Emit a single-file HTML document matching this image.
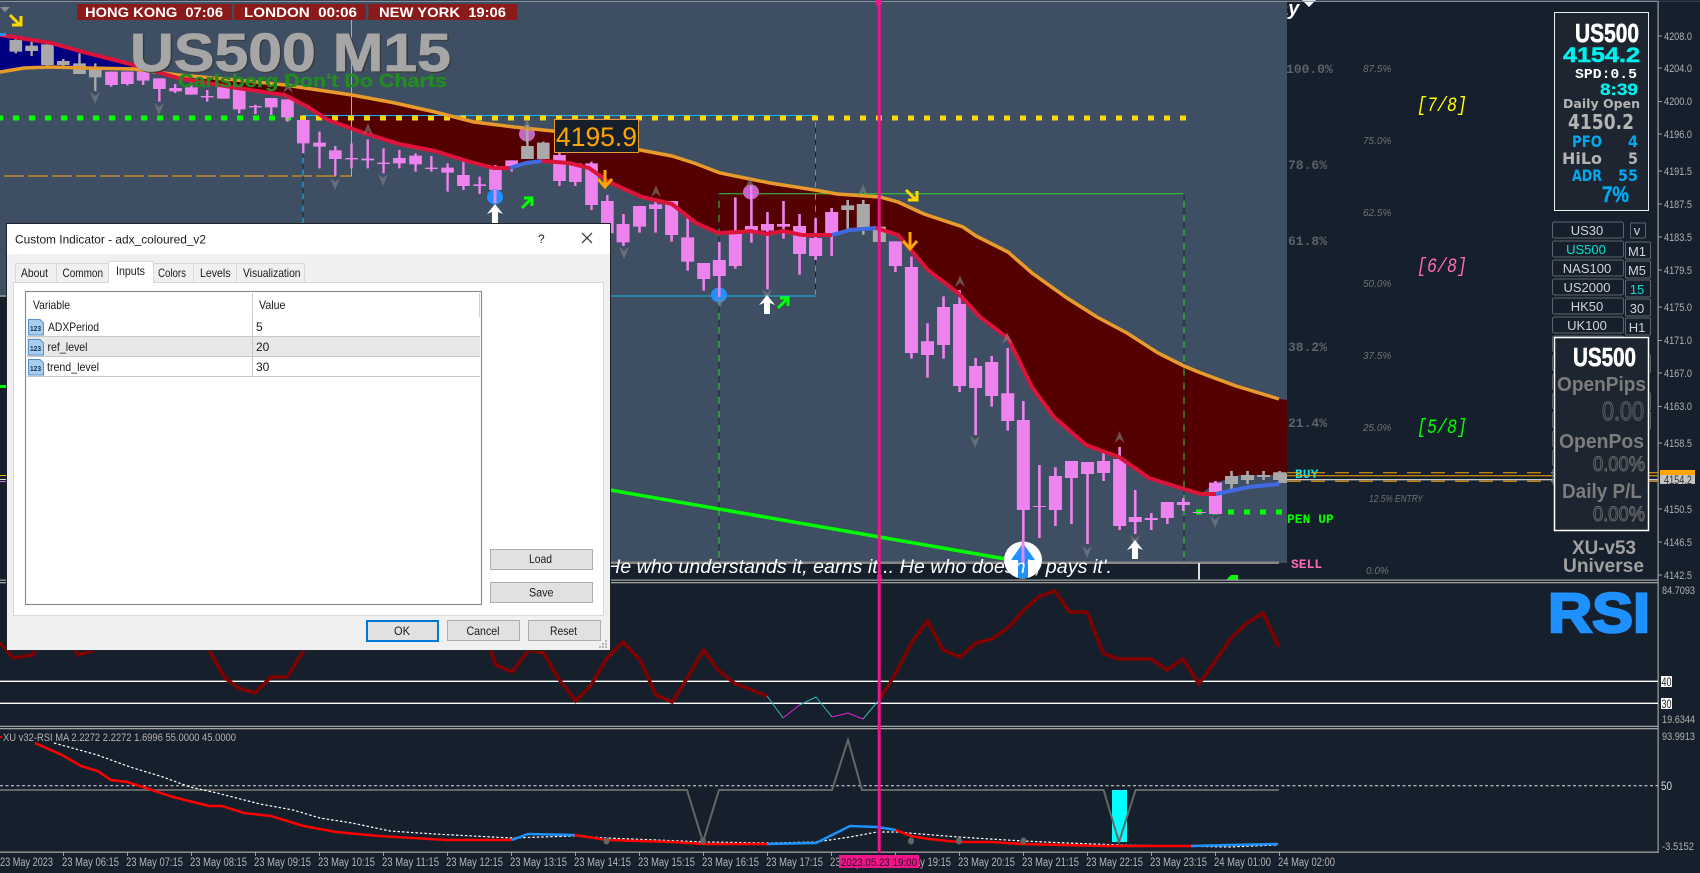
<!DOCTYPE html>
<html><head><meta charset="utf-8"><title>US500 M15</title>
<style>
html,body{margin:0;padding:0;background:#16202c;width:1700px;height:873px;overflow:hidden}
svg{display:block}
text{font-family:"Liberation Sans",sans-serif}
.m{font-family:"Liberation Mono",monospace}
.d{font-family:"DejaVu Sans",sans-serif}
.ax{fill:#b0b0b0;font-size:11px}
.t{fill:#b4b4b4;font-size:11.5px}
.dl{fill:#1a1a1a;font-size:12px}
.fb{fill:#5c6268;font-size:13px;font-family:"Liberation Mono",monospace;font-weight:bold}
.sm{fill:#6e7276;font-size:10px;font-style:italic}
.btn{fill:none;stroke:#5d646c;stroke-width:1}
.bt{fill:#d0d4d8;font-size:13px;text-anchor:middle}
.dg{fill:none;stroke:#6e6e6e;stroke-width:.9}
</style></head><body>
<svg xmlns="http://www.w3.org/2000/svg" width="1700" height="873" viewBox="0 0 1700 873">
<defs>
<path id="fd" d="M-5-6L0-2L5-6L0 6z" fill="#8a8a8a" fill-opacity=".55"/>
<path id="fu" d="M0-6L5 6L0 2L-5 6z" fill="#8a8a8a" fill-opacity=".55"/>
<path id="wa" d="M0 0L8 10L3 8V19H-3V8L-8 10z" fill="#fff"/>
<path id="oa" d="M0 0V17M-7 9L0 17L7 9" stroke="#ffa500" stroke-width="3" fill="none"/>
</defs>
<rect width="1700" height="873" fill="#16202c"/>
<text x="1277" y="15" fill="#fff" font-size="20" font-weight="bold" font-style="italic">ay</text>
<path d="M1302 0h14l-7 7z" fill="#fff"/>
<rect x="0" y="1" width="1287" height="562" fill="#3e4f63"/>
<rect x="0" y="297" width="7" height="283" fill="#16202c"/>
<rect x="0" y="295" width="7" height="2" fill="#888"/>
<rect x="0" y="385" width="6" height="3" fill="#0f0"/>
<rect x="0" y="475" width="7" height="1" fill="#ffa500"/>
<rect x="0" y="479" width="7" height="1" fill="#ddd"/>
<rect x="0" y="481" width="7" height="1" fill="#c070d0"/>
<rect x="0" y="0.7" width="1658" height="1.2" fill="#8c9aa8"/>
<rect x="1658" y="0.7" width="42" height="1" fill="#3a4654"/>

<!-- MA band -->
<polygon fill="#000080" points="0,35 20,38 51,43 87,53 134,65 134,67 87,68 51,67 24,68 0,72"/>
<polygon fill="#550000" points="134,67 178,75 237,80 285,85 352,95 395,103 435,112 474,122 514,127 553,131 590,140 620,148 640,150 672,156 694,163 720,173 750,179 770,183 815,190 837,194 880,197 898,202 924,214 963,227 976,236 1008,252 1032,273 1067,298 1097,317 1127,333 1158,353 1184,366 1201,373 1236,386 1279,399 1287,400 1287,475 1240,475 1215,483 1201,494 1184,489 1149,478 1119,457 1086,445 1054,417 1032,387 1008,338 980,317 958,293 928,270 911,250 898,235 876,228 850,230 832,235 802,235 783,231 767,234 750,231 741,232 718,233 696,223 672,204 642,197 620,187 609,182 589,168 569,163 542,161 526,163 510,168 494,168 467,161 435,151 399,144 364,133 328,120 308,107 285,95 237,88 178,78"/>

<!-- rectangles -->
<path d="M0 176H351.5V20" fill="none" stroke="#ffa500" stroke-width="1"/>
<path d="M0 176H351.5" fill="none" stroke="#3e4f63" stroke-width="1" stroke-dasharray="4 20"/>
<path d="M303 224V115.5H815.5V296H600" fill="none" stroke="#10b4f0" stroke-width="1"/>
<path d="M303 115.5V224M815.5 115.5V296" fill="none" stroke="#1a2430" stroke-width="1" stroke-dasharray="6 6"/>
<path d="M719 562V193.7H1184V562Z" fill="none" stroke="#32cd32" stroke-width="1"/>
<path d="M719 193.7V562M1184 193.7V562" fill="none" stroke="#1a2430" stroke-width="1" stroke-dasharray="7 7"/>
<path d="M600 296H720" stroke="#10b4f0" stroke-width="1"/>

<!-- dots -->
<path d="M-3 118H293" stroke="#0f0" stroke-width="5" stroke-dasharray="6 10"/>
<path d="M300 118H1188" stroke="#ffd700" stroke-width="5" stroke-dasharray="6 10"/>
<path d="M1196 512H1285" stroke="#0f0" stroke-width="5" stroke-dasharray="6 10"/>
<path d="M610 490L1023 562" stroke="#0f0" stroke-width="3.5" fill="none"/>
<rect x="600" y="561.5" width="679" height="2.5" fill="#888"/>

<!-- candles in first coordinate set -->
<g transform="scale(.3954 .3333)" fill="none">
<path stroke="#a9a9a9" stroke-width="6" d="M40 115V160M80 125V168M120 130V200M160 177V200M201 160V222M241 190V273M1334 400V477M1374 425V477"/>
<path stroke="#a9a9a9" stroke-width="32" d="M40 120V155M80 137V153M120 133V195M160 183V195M201 190V222M241 208V232M1334 438V477M1374 428V477"/>
<path stroke="#ee82ee" stroke-width="6" d="M281 215V260M322 215V256M362 215V255M403 235V305M443 252V279M484 245V284M524 270V305M565 260V296M605 265V340M646 314V342M686 294V345M727 298V365M767 360V460M808 395V505M848 438V527M889 430V505M930 418V505M970 445V520M1010 450V505M1051 460V515M1091 468V515M1132 490V575M1172 485V570M1213 530V582M1253 495V610M1294 481V515M1415 455V558M1455 490V558M1496 485V630M1536 585V700"/>
<path stroke="#ee82ee" stroke-width="32" d="M282 215V255M322 215V252M362 215V242M403 235V267M444 264V274M484 262V284M524 288V292M565 260V296M605 265V328M646 318V322M686 294V322M727 298V352M767 360V430M808 428V440M848 451V477M889 474V478M930 476V481M970 488V492M1010 474V490M1051 467V493M1091 503V507M1132 503V518M1172 525V558M1213 553V558M1253 508V570M1294 481V503M1415 465V543M1455 490V546M1496 490V615M1536 603V700"/>
</g>
<!-- candles in second coordinate set -->
<g transform="translate(620 100) scale(.4337 .3333)" fill="none">
<path stroke="#ee82ee" stroke-width="6" d="M8 342V438M45 318V398M82 300V398M119 303V425M156 354V512M193 489V572M229 426V600M266 292V506M303 300V428M340 336V568M377 303V416M414 342V524M451 354V480M488 324V468M635 424V516M672 470V776M709 670V833M746 589V776M783 570V876M820 774V1005M857 768V920M894 744V992M930 903V1390M967 1095V1314M1004 1102V1278M1041 1083V1272M1078 1086V1332M1115 1053V1143M1152 1041V1290M1188 1170V1302M1225 1239V1290M1262 1206V1272M1299 1194V1233M1373 1143V1242"/>
<path stroke="#ee82ee" stroke-width="30" d="M7 372V427M45 318V380M82 313V327M119 303V405M156 412V485M193 489V537M229 480V528M266 391V498M303 378V392M340 372V392M377 372V380M414 378V462M451 414V468M488 336V400M635 424V498M672 501V759M709 724V765M746 621V735M783 612V858M820 798V864M857 786V888M894 880V963M930 960V1230M967 1218V1221M1004 1128V1230M1041 1083V1134M1078 1086V1122M1115 1083V1119M1152 1077V1278M1188 1251V1266M1225 1254V1260M1262 1206V1254M1299 1206V1215M1336 1236V1239M1373 1148V1242"/>
<path stroke="#a9a9a9" stroke-width="6" d="M525 300V390M561 300V404M598 380V426M1410 1113V1170M1447 1113V1152M1484 1113V1140M1521 1113V1150"/>
<path stroke="#a9a9a9" stroke-width="30" d="M525 316V330M561 312V382M598 380V426M1410 1128V1152M1447 1125V1140M1484 1125V1131M1521 1117V1140"/>
</g>

<!-- circles -->
<ellipse cx="495" cy="197" rx="8" ry="7.5" fill="#1e90ff"/>
<rect x="493.5" y="190" width="3" height="13" fill="#ee82ee"/>
<ellipse cx="719" cy="295" rx="8" ry="7.5" fill="#1e90ff"/>
<rect x="718" y="285" width="2.5" height="12" fill="#ee82ee"/>
<ellipse cx="527" cy="134" rx="8" ry="7.5" fill="#c864c8"/>
<rect x="526" y="125" width="2.5" height="18" fill="#a9a9a9"/>
<ellipse cx="751" cy="192" rx="8" ry="7.5" fill="#c864c8"/>
<rect x="750" y="185" width="2.5" height="15" fill="#ee82ee"/>

<!-- MA lines -->
<polyline fill="none" stroke="#e89a2c" stroke-width="3.5" points="0,72 24,68 51,67 87,68 134,69 178,75 237,80 285,85 352,95 395,103 435,112 474,122 514,127 553,131 590,140 620,148 640,150 672,156 694,163 720,173 750,179 770,183 815,190 837,194 880,197 898,202 924,214 963,227 976,236 1008,252 1032,273 1067,298 1097,317 1127,333 1158,353 1184,366 1201,373 1236,386 1279,399"/>
<polyline fill="none" stroke="#dc143c" stroke-width="4" points="0,35 20,38 51,43 87,53 134,65 178,78 237,88 285,95 308,107 328,120 364,133 399,144 435,151 467,161 494,168 510,168"/>
<polyline fill="none" stroke="#4169e1" stroke-width="4" points="510,168 526,163 542,161"/>
<polyline fill="none" stroke="#dc143c" stroke-width="4" points="542,161 569,163 589,168 609,182 620,187 642,197 672,204 696,223 718,233 741,232 750,231 767,234 783,231 802,235 832,235"/>
<polyline fill="none" stroke="#4169e1" stroke-width="4" points="832,235 850,230 876,228"/>
<polyline fill="none" stroke="#dc143c" stroke-width="4" points="876,228 898,235 911,250 928,270 958,293 980,317 1008,338 1032,387 1054,417 1086,445 1119,457 1149,478 1184,489 1201,494 1216,494"/>
<polyline fill="none" stroke="#4169e1" stroke-width="4" points="1216,494 1249,487 1279,484"/>
<rect x="0" y="33" width="6" height="3" fill="#1e90ff"/>

<!-- fractals -->
<use href="#fd" x="95" y="98"/><use href="#fd" x="159" y="109"/><use href="#fd" x="335" y="184"/><use href="#fd" x="383" y="180"/>
<use href="#fu" x="288" y="87"/><use href="#fu" x="368" y="129"/><use href="#fu" x="527" y="125"/>
<use href="#fd" x="624" y="253"/><use href="#fd" x="767" y="295"/><use href="#fd" x="720" y="302"/><use href="#fd" x="975" y="442"/><use href="#fd" x="1087" y="552"/><use href="#fd" x="1135" y="541"/><use href="#fd" x="1215" y="522"/>
<use href="#fu" x="656" y="191"/><use href="#fu" x="750" y="183"/><use href="#fu" x="863" y="190"/><use href="#fu" x="960" y="281"/><use href="#fu" x="1007" y="338"/><use href="#fu" x="1119.5" y="437"/>
<path d="M0 7h10l-5 5z" fill="#8a8f95"/>

<!-- arrows -->
<use href="#wa" x="495" y="204"/><use href="#wa" x="767" y="295"/><use href="#wa" x="1135" y="540"/>
<use href="#oa" x="605" y="170"/><use href="#oa" x="910" y="232"/>
<path d="M10 15L20 25M21 16V25H12" stroke="#ffd700" stroke-width="3" fill="none"/>
<path d="M906 190L916 200M917 191V200H908" stroke="#ffd700" stroke-width="3" fill="none"/>
<path d="M522 208L532 198M524 198H532V206" stroke="#0f0" stroke-width="3" fill="none"/>
<path d="M778 308L788 298M780 298H788V306" stroke="#0f0" stroke-width="3" fill="none"/>

<!-- bottom text / circle -->
<rect x="0" y="564" width="1287" height="16" fill="#16202c"/>
<rect x="1198" y="563" width="2" height="17" fill="#ddd"/>
<path d="M1226 580L1231 575H1238V580z" fill="#0f0"/>
<ellipse cx="1023" cy="560" rx="19" ry="18.5" fill="#fff"/>
<path d="M1023 543L1035 560H1028V578H1018V560H1011z" fill="#1e90ff"/>
<rect x="1021.5" y="540" width="3" height="24" fill="#ee82ee"/>
<text x="606" y="573" fill="#fff" font-size="19" font-style="italic" textLength="506" lengthAdjust="spacingAndGlyphs">He who understands it, earns it... He who doesn't, pays it'.</text>

<!-- headers -->
<rect x="77" y="4" width="155" height="16" fill="#8b1a1a"/>
<rect x="234" y="4" width="132" height="16" fill="#8b1a1a"/>
<rect x="368.5" y="4" width="148.5" height="16" fill="#8b1a1a"/>
<text x="85" y="17" fill="#fff" font-size="14" font-weight="bold" textLength="138" lengthAdjust="spacingAndGlyphs" xml:space="preserve">HONG KONG  07:06</text>
<text x="244" y="17" fill="#fff" font-size="14" font-weight="bold" textLength="113" lengthAdjust="spacingAndGlyphs" xml:space="preserve">LONDON  00:06</text>
<text x="379" y="17" fill="#fff" font-size="14" font-weight="bold" textLength="127" lengthAdjust="spacingAndGlyphs" xml:space="preserve">NEW YORK  19:06</text>

<text x="131.500" y="72" fill="#3a3a3a" font-size="54" font-weight="bold" stroke="#3a3a3a" stroke-width=".8" textLength="321" lengthAdjust="spacingAndGlyphs">US500 M15</text>
<text x="130" y="71" fill="#a6a6a6" font-size="54" font-weight="bold" stroke="#a6a6a6" stroke-width=".8" textLength="321" lengthAdjust="spacingAndGlyphs">US500 M15</text>
<text x="178" y="87" fill="#228b22" stroke="#228b22" stroke-width=".4" font-size="18" font-weight="bold" textLength="269" lengthAdjust="spacingAndGlyphs">Carlsberg Don't Do Charts</text>

<rect x="554.500" y="119.500" width="84" height="33" fill="#16202c" stroke="#e89a2c"/>
<text x="556" y="146" fill="#ffa500" font-size="27" textLength="81" lengthAdjust="spacingAndGlyphs">4195.9</text>

<!-- fib labels -->
<text x="1286" y="73" class="fb">100.0%</text>
<text x="1288" y="169" class="fb">78.6%</text>
<text x="1288" y="245" class="fb">61.8%</text>
<text x="1288" y="351" class="fb">38.2%</text>
<text x="1288" y="427" class="fb">21.4%</text>
<text x="1295" y="478" class="m" fill="#00e5e5" font-size="13" font-weight="bold">BUY</text>
<text x="1287" y="523" class="m" fill="#0f0" font-size="13" font-weight="bold">PEN UP</text>
<text x="1291" y="568" class="m" fill="#ff69b4" font-size="13" font-weight="bold">SELL</text>
<text x="1363" y="72" class="sm">87.5%</text>
<text x="1363" y="144" class="sm">75.0%</text>
<text x="1363" y="216" class="sm">62.5%</text>
<text x="1363" y="287" class="sm">50.0%</text>
<text x="1363" y="359" class="sm">37.5%</text>
<text x="1363" y="431" class="sm">25.0%</text>
<text x="1369" y="502" class="sm" textLength="54" lengthAdjust="spacingAndGlyphs">12.5% ENTRY</text>
<text x="1366" y="574" class="sm">0.0%</text>
<text x="1417" y="111" class="m" fill="#ffff00" font-size="20" font-style="italic" textLength="50" lengthAdjust="spacingAndGlyphs">[7/8]</text>
<text x="1417" y="272" class="m" fill="#ff69b4" font-size="20" font-style="italic" textLength="50" lengthAdjust="spacingAndGlyphs">[6/8]</text>
<text x="1417" y="433" class="m" fill="#0f0" font-size="20" font-style="italic" textLength="50" lengthAdjust="spacingAndGlyphs">[5/8]</text>

<!-- price lines -->
<path d="M1287 472.700H1658M1287 481.300H1658" stroke="#ffa500" stroke-width="1" stroke-dasharray="14 10"/>
<path d="M1287 475.700H1658" stroke="#ffa500" stroke-width="1"/>
<path d="M1287 479.700H1658" stroke="#fff" stroke-width="1"/>
<rect x="1280" y="473" width="7" height="10" fill="#a9a9a9"/>

<!-- buttons -->
<g>
<rect class="btn" x="1552.500" y="222" width="71" height="16" rx="2"/>
<rect class="btn" x="1552.500" y="241" width="71" height="16" rx="2"/>
<rect class="btn" x="1552.500" y="260" width="71" height="16" rx="2"/>
<rect class="btn" x="1552.500" y="279" width="71" height="16" rx="2"/>
<rect class="btn" x="1552.500" y="298" width="71" height="16" rx="2"/>
<rect class="btn" x="1552.500" y="317" width="71" height="16" rx="2"/>
<rect class="btn" x="1552.500" y="336" width="71" height="16" rx="2"/>
<rect class="btn" x="1552.500" y="355" width="71" height="16" rx="2"/>
<rect class="btn" x="1552.500" y="374" width="71" height="16" rx="2"/>
<rect class="btn" x="1552.500" y="393" width="71" height="16" rx="2"/>
<rect class="btn" x="1552.500" y="412" width="71" height="16" rx="2"/>
<rect class="btn" x="1552.500" y="431" width="71" height="16" rx="2"/>
<rect class="btn" x="1552.500" y="450" width="71" height="16" rx="2"/>
<rect class="btn" x="1552.500" y="469" width="71" height="16" rx="2"/>
<rect class="btn" x="1630.500" y="223" width="15" height="15" rx="1"/>
<rect class="btn" x="1625.500" y="242" width="25" height="17" rx="1"/>
<rect class="btn" x="1625.500" y="261" width="25" height="17" rx="1"/>
<rect class="btn" x="1625.500" y="280" width="25" height="17" rx="1"/>
<rect class="btn" x="1625.500" y="299" width="25" height="17" rx="1"/>
<rect class="btn" x="1625.500" y="318" width="25" height="17" rx="1"/>
<rect class="btn" x="1625.500" y="355" width="25" height="17" rx="1"/>
<rect class="btn" x="1625.500" y="393" width="25" height="17" rx="1"/>
<rect class="btn" x="1625.500" y="412" width="25" height="17" rx="1"/>
</g>
<text x="1587" y="235" class="bt">US30</text>
<text x="1586" y="254" class="bt" style="fill:#00e5d0">US500</text>
<text x="1587" y="273" class="bt">NAS100</text>
<text x="1587" y="292" class="bt">US2000</text>
<text x="1587" y="311" class="bt">HK50</text>
<text x="1587" y="330" class="bt">UK100</text>
<text x="1637" y="235" class="bt">v</text>
<text x="1637" y="256" class="bt">M1</text>
<text x="1637" y="275" class="bt">M5</text>
<text x="1637" y="294" class="bt" style="fill:#00e5d0">15</text>
<text x="1637" y="313" class="bt">30</text>
<text x="1637" y="332" class="bt">H1</text>

<!-- info box 1 -->
<rect x="1554.500" y="12.500" width="94" height="198" fill="#1c2530" stroke="#e8f0f0"/>
<text x="1575" y="42" fill="#fff" stroke="#fff" stroke-width=".6" font-size="26" font-weight="bold" textLength="64" lengthAdjust="spacingAndGlyphs">US500</text>
<text x="1563" y="62" fill="#00f0f0" stroke="#00f0f0" stroke-width=".5" font-size="21" font-weight="bold" textLength="77" lengthAdjust="spacingAndGlyphs">4154.2</text>
<text x="1575" y="78" class="m" fill="#fff" font-size="14" font-weight="bold" textLength="62" lengthAdjust="spacingAndGlyphs">SPD:0.5</text>
<text x="1600" y="95" fill="#00f0f0" stroke="#00f0f0" stroke-width=".3" font-size="17" font-weight="bold" textLength="38" lengthAdjust="spacingAndGlyphs">8:39</text>
<text x="1563" y="108" class="d" fill="#b4b4b4" font-size="12" font-weight="bold" textLength="77" lengthAdjust="spacingAndGlyphs">Daily Open</text>
<text x="1568" y="129" class="d" fill="#b4b4b4" font-size="20" font-weight="bold" textLength="66" lengthAdjust="spacingAndGlyphs">4150.2</text>
<text x="1572" y="147" class="d" fill="#00a8f0" font-size="16" font-weight="bold" textLength="30" lengthAdjust="spacingAndGlyphs">PFO</text>
<text x="1628" y="147" class="d" fill="#00a8f0" font-size="16" font-weight="bold" textLength="10" lengthAdjust="spacingAndGlyphs">4</text>
<text x="1562" y="164" class="d" fill="#b4b4b4" font-size="16" font-weight="bold" textLength="40" lengthAdjust="spacingAndGlyphs">HiLo</text>
<text x="1628" y="164" class="d" fill="#b4b4b4" font-size="16" font-weight="bold" textLength="10" lengthAdjust="spacingAndGlyphs">5</text>
<text x="1572" y="181" class="d" fill="#00a8f0" font-size="16" font-weight="bold" textLength="30" lengthAdjust="spacingAndGlyphs">ADR</text>
<text x="1618" y="181" class="d" fill="#00a8f0" font-size="16" font-weight="bold" textLength="20" lengthAdjust="spacingAndGlyphs">55</text>
<text x="1602" y="202" fill="#00a8f0" stroke="#00a8f0" stroke-width=".4" font-size="22" font-weight="bold" textLength="27" lengthAdjust="spacingAndGlyphs">7%</text>

<!-- info box 2 -->
<rect x="1554.500" y="337.500" width="94" height="193" fill="#1c2530" stroke="#fff" stroke-width="1.500"/>
<text x="1573" y="366" fill="#fff" stroke="#fff" stroke-width=".6" font-size="26" font-weight="bold" textLength="63" lengthAdjust="spacingAndGlyphs">US500</text>
<text x="1557" y="391" fill="#7c7c7c" font-size="20" font-weight="bold" textLength="89" lengthAdjust="spacingAndGlyphs">OpenPips</text>
<text x="1602" y="420" class="dg" font-size="26" textLength="42" lengthAdjust="spacingAndGlyphs">0.00</text>
<text x="1559" y="448" fill="#7c7c7c" font-size="20" font-weight="bold" textLength="85" lengthAdjust="spacingAndGlyphs">OpenPos</text>
<text x="1593" y="471" class="dg" font-size="21" textLength="52" lengthAdjust="spacingAndGlyphs">0.00%</text>
<text x="1562" y="498" fill="#7c7c7c" font-size="20" font-weight="bold" textLength="80" lengthAdjust="spacingAndGlyphs">Daily P/L</text>
<text x="1593" y="521" class="dg" font-size="21" textLength="52" lengthAdjust="spacingAndGlyphs">0.00%</text>
<text x="1572" y="554" fill="#a0a0a0" font-size="19" font-weight="bold" textLength="64" lengthAdjust="spacingAndGlyphs">XU-v53</text>
<text x="1563" y="572" fill="#a0a0a0" font-size="19" font-weight="bold" textLength="81" lengthAdjust="spacingAndGlyphs">Universe</text>
<text x="1548" y="632" fill="#1e90ff" font-size="56" font-weight="bold" textLength="102" lengthAdjust="spacingAndGlyphs" stroke="#1e90ff" stroke-width="2.5">RSI</text>

<!-- pane separators and axis -->
<rect x="0" y="579.500" width="1658" height="1.300" fill="#a0a0a0"/>
<rect x="0" y="582" width="1658" height="1.300" fill="#a0a0a0"/>
<rect x="0" y="725.700" width="1658" height="1.300" fill="#a0a0a0"/>
<rect x="0" y="728" width="1658" height="1.300" fill="#a0a0a0"/>
<rect x="0" y="851.500" width="1658" height="1.300" fill="#a0a0a0"/>
<rect x="1657.500" y="1" width="1.200" height="852" fill="#a0a0a0"/>

<!-- RSI pane -->
<path d="M0 681.300H1658M0 703.300H1658" stroke="#fff" stroke-width="1.300"/>
<polyline fill="none" stroke="#800000" stroke-width="3.500" points="0,643 13.500,658 32.500,655 40,640 60,630 78.600,655 97.500,649 150,620 208.700,650 225,678 238.500,688 255,693 271,677 287,677 306,647 400,620 490.500,650 496,665 512,672 528.500,650 543.600,653 558,678 575.600,701 591,685 607,658 623,642 640,660 656,695 672,702 688,677 703.500,650 718,670 734,683 767,696"/>
<path d="M767 696L783 718" stroke="#2fb8b8" fill="none"/>
<path d="M783 718L799.500 705" stroke="#e020e0" fill="none"/>
<path d="M799.500 705L816 697L832 717" stroke="#2fb8b8" fill="none"/>
<path d="M832 717L848 713L863 719" stroke="#e020e0" fill="none"/>
<path d="M863 719L879 700" stroke="#2fb8b8" fill="none"/>
<polyline fill="none" stroke="#800000" stroke-width="3.500" points="879,700 893,678 912,642 927.500,621 943,650 960,657 976,643 992,639 1010,626 1023,611 1038,597 1055,591 1069.500,612 1087,612 1103,653 1118,659 1151,659 1167,670 1183,659 1199,684 1216,660 1231,638 1247,623 1263,613 1279,647"/>

<!-- indicator pane -->
<text x="3" y="741" fill="#b4b4b4" font-size="11" textLength="233" lengthAdjust="spacingAndGlyphs">XU v32-RSI MA 2.2272 2.2272 1.6996 55.0000 45.0000</text>
<rect x="0" y="736" width="2" height="2" fill="#f00"/>
<rect x="1112" y="790" width="15" height="52" fill="#0ff"/>
<path d="M0 785.700H1658" stroke="#ddd" stroke-width="1" stroke-dasharray="3 2.500"/>
<polyline fill="none" stroke="#666" stroke-width="2" points="0,790 687,790 703,842 719,790 832,790 848,740 850,747 862,790 1103.600,790 1119,842 1135.600,790 1279,790"/>
<polyline fill="none" stroke="#fff" stroke-width="1.200" stroke-dasharray="2.500 2" points="54,743 97.500,755 130,767 163,777 190,787 217,793 260,804 293,810 320,818 352,823 390,831 434,834 512,838 542,837 575,836 607,838 705,842 770,843 816,842 850,837 877,832 896,832 958,837 1023,841 1067,843 1121,845 1229,847 1278,845"/>
<polyline fill="none" stroke="#f00" stroke-width="2.500" points="35,743 62,755 81,766 97.500,771 111,780 127,782 146,788 173,797 209,806 222,806 244,813 271,816 303.500,826 336,832 379,836 447,840 512,840"/>
<polyline fill="none" stroke="#1e90ff" stroke-width="2.500" points="512,840 528,834 574.500,835"/>
<polyline fill="none" stroke="#f00" stroke-width="2.500" points="574.500,835 607,840 672,842 705,844 767,844"/>
<polyline fill="none" stroke="#1e90ff" stroke-width="2.500" points="767,844 816,843 832,835 850,826 877,827 896,830"/>
<polyline fill="none" stroke="#f00" stroke-width="2.500" points="896,830 911,836 929,839 958,842 991,842 1023,844 1105,846 1191,846"/>
<polyline fill="none" stroke="#1e90ff" stroke-width="2.500" points="1191,846 1229,845 1278,844"/>
<ellipse cx="606.500" cy="841" rx="3" ry="3.500" fill="#666"/>
<ellipse cx="703" cy="841" rx="3" ry="3.500" fill="#666"/>
<ellipse cx="911" cy="841" rx="3" ry="3.500" fill="#666"/>
<ellipse cx="959" cy="841" rx="3" ry="3.500" fill="#666"/>
<ellipse cx="1023.500" cy="841" rx="3" ry="3.500" fill="#666"/>

<!-- price axis -->
<path stroke="#a0a0a0" d="M1658 36h4M1658 68h4M1658 101.500h4M1658 134h4M1658 171h4M1658 204h4M1658 237h4M1658 270h4M1658 307h4M1658 340.500h4M1658 373h4M1658 406.500h4M1658 443h4M1658 509h4M1658 542h4M1658 575h4"/>
<g class="ax">
<text x="1664" y="40" class="ax" textLength="28" lengthAdjust="spacingAndGlyphs">4208.0</text>
<text x="1664" y="72" class="ax" textLength="28" lengthAdjust="spacingAndGlyphs">4204.0</text>
<text x="1664" y="105" class="ax" textLength="28" lengthAdjust="spacingAndGlyphs">4200.0</text>
<text x="1664" y="138" class="ax" textLength="28" lengthAdjust="spacingAndGlyphs">4196.0</text>
<text x="1664" y="175" class="ax" textLength="28" lengthAdjust="spacingAndGlyphs">4191.5</text>
<text x="1664" y="208" class="ax" textLength="28" lengthAdjust="spacingAndGlyphs">4187.5</text>
<text x="1664" y="241" class="ax" textLength="28" lengthAdjust="spacingAndGlyphs">4183.5</text>
<text x="1664" y="274" class="ax" textLength="28" lengthAdjust="spacingAndGlyphs">4179.5</text>
<text x="1664" y="311" class="ax" textLength="28" lengthAdjust="spacingAndGlyphs">4175.0</text>
<text x="1664" y="344" class="ax" textLength="28" lengthAdjust="spacingAndGlyphs">4171.0</text>
<text x="1664" y="377" class="ax" textLength="28" lengthAdjust="spacingAndGlyphs">4167.0</text>
<text x="1664" y="410" class="ax" textLength="28" lengthAdjust="spacingAndGlyphs">4163.0</text>
<text x="1664" y="447" class="ax" textLength="28" lengthAdjust="spacingAndGlyphs">4158.5</text>
<text x="1664" y="513" class="ax" textLength="28" lengthAdjust="spacingAndGlyphs">4150.5</text>
<text x="1664" y="546" class="ax" textLength="28" lengthAdjust="spacingAndGlyphs">4146.5</text>
<text x="1664" y="579" class="ax" textLength="28" lengthAdjust="spacingAndGlyphs">4142.5</text>
<text x="1662" y="594" class="ax" textLength="33" lengthAdjust="spacingAndGlyphs">84.7093</text>
<text x="1662" y="723" class="ax" textLength="33" lengthAdjust="spacingAndGlyphs">19.6344</text>
<text x="1662" y="740" class="ax" textLength="33" lengthAdjust="spacingAndGlyphs">93.9913</text>
<text x="1662" y="850" class="ax" textLength="32" lengthAdjust="spacingAndGlyphs">-3.5152</text>
<text x="1661" y="790" class="ax" textLength="11" lengthAdjust="spacingAndGlyphs" style="fill:#ddd;font-size:12px">50</text>
</g>
<rect x="1660" y="470" width="35" height="6" fill="#ffa500"/>
<rect x="1660" y="475" width="35" height="9" fill="#c4c4c4"/>
<text x="1664" y="484" font-size="12" fill="#333" textLength="28" lengthAdjust="spacingAndGlyphs">4154.2</text>
<rect x="1661" y="676" width="11" height="11" fill="#fff"/>
<text x="1661.500" y="686" font-size="12" fill="#222" textLength="10" lengthAdjust="spacingAndGlyphs">40</text>
<rect x="1661" y="698" width="11" height="11" fill="#fff"/>
<text x="1661.500" y="708" font-size="12" fill="#222" textLength="10" lengthAdjust="spacingAndGlyphs">30</text>

<!-- time axis -->
<path stroke="#a0a0a0" d="M63.500 852v4M127.500 852v4M191.500 852v4M255.500 852v4M319.500 852v4M383.500 852v4M447.500 852v4M511.500 852v4M575.500 852v4M639.500 852v4M703.500 852v4M767.500 852v4M831.500 852v4M895.500 852v4M959.500 852v4M1023.500 852v4M1087.500 852v4M1151.500 852v4M1215.500 852v4M1279.500 852v4"/>
<text x="0" y="866" class="t" textLength="53" lengthAdjust="spacingAndGlyphs">23 May 2023</text>
<text x="62" y="866" class="t" textLength="57" lengthAdjust="spacingAndGlyphs">23 May 06:15</text>
<text x="126" y="866" class="t" textLength="57" lengthAdjust="spacingAndGlyphs">23 May 07:15</text>
<text x="190" y="866" class="t" textLength="57" lengthAdjust="spacingAndGlyphs">23 May 08:15</text>
<text x="254" y="866" class="t" textLength="57" lengthAdjust="spacingAndGlyphs">23 May 09:15</text>
<text x="318" y="866" class="t" textLength="57" lengthAdjust="spacingAndGlyphs">23 May 10:15</text>
<text x="382" y="866" class="t" textLength="57" lengthAdjust="spacingAndGlyphs">23 May 11:15</text>
<text x="446" y="866" class="t" textLength="57" lengthAdjust="spacingAndGlyphs">23 May 12:15</text>
<text x="510" y="866" class="t" textLength="57" lengthAdjust="spacingAndGlyphs">23 May 13:15</text>
<text x="574" y="866" class="t" textLength="57" lengthAdjust="spacingAndGlyphs">23 May 14:15</text>
<text x="638" y="866" class="t" textLength="57" lengthAdjust="spacingAndGlyphs">23 May 15:15</text>
<text x="702" y="866" class="t" textLength="57" lengthAdjust="spacingAndGlyphs">23 May 16:15</text>
<text x="766" y="866" class="t" textLength="57" lengthAdjust="spacingAndGlyphs">23 May 17:15</text>
<text x="830" y="866" class="t" textLength="57" lengthAdjust="spacingAndGlyphs">23 May 18:15</text>
<text x="894" y="866" class="t" textLength="57" lengthAdjust="spacingAndGlyphs">23 May 19:15</text>
<text x="958" y="866" class="t" textLength="57" lengthAdjust="spacingAndGlyphs">23 May 20:15</text>
<text x="1022" y="866" class="t" textLength="57" lengthAdjust="spacingAndGlyphs">23 May 21:15</text>
<text x="1086" y="866" class="t" textLength="57" lengthAdjust="spacingAndGlyphs">23 May 22:15</text>
<text x="1150" y="866" class="t" textLength="57" lengthAdjust="spacingAndGlyphs">23 May 23:15</text>
<text x="1214" y="866" class="t" textLength="57" lengthAdjust="spacingAndGlyphs">24 May 01:00</text>
<text x="1278" y="866" class="t" textLength="57" lengthAdjust="spacingAndGlyphs">24 May 02:00</text>

<!-- crosshair -->
<rect x="877.700" y="0" width="3" height="853" fill="#f0148c"/>
<rect x="876" y="0" width="6" height="5" fill="#f0148c"/>
<rect x="877" y="575" width="5" height="5" fill="#f0148c"/>
<rect x="839" y="855" width="80" height="13" fill="#f0148c"/>
<text x="841" y="866" font-size="11" fill="#2a1020" textLength="76" lengthAdjust="spacingAndGlyphs">2023.05.23 19:00</text>

<!-- dialog -->
<rect x="6" y="223" width="605" height="428" fill="#20242a"/>
<rect x="7" y="224" width="603" height="426" fill="#f0f0f0"/>
<rect x="7" y="224" width="603" height="30" fill="#fff"/>
<text x="15" y="243.500" class="dl" textLength="191" lengthAdjust="spacingAndGlyphs">Custom Indicator - adx_coloured_v2</text>
<text x="538" y="243" class="dl" font-size="13">?</text>
<path d="M582 233L592 243M592 233L582 243" stroke="#222" stroke-width="1.100"/>
<g fill="#f0f0f0" stroke="#d9d9d9">
<rect x="15.500" y="263.500" width="41" height="19"/>
<rect x="56.500" y="263.500" width="52" height="19"/>
<rect x="153.500" y="263.500" width="40" height="19"/>
<rect x="193.500" y="263.500" width="43" height="19"/>
<rect x="236.500" y="263.500" width="68" height="19"/>
</g>
<rect x="13.500" y="282.500" width="590" height="333" fill="#fff" stroke="#d9d9d9"/>
<path d="M108.500 283V261.500H153.500V283" fill="#fff" stroke="#d9d9d9"/>
<rect x="109" y="280" width="44" height="4" fill="#fff"/>
<text x="21" y="277" class="dl" textLength="27" lengthAdjust="spacingAndGlyphs">About</text>
<text x="62.500" y="277" class="dl" textLength="40.500" lengthAdjust="spacingAndGlyphs">Common</text>
<text x="116" y="275" class="dl" textLength="29" lengthAdjust="spacingAndGlyphs">Inputs</text>
<text x="158" y="277" class="dl" textLength="28" lengthAdjust="spacingAndGlyphs">Colors</text>
<text x="200" y="277" class="dl" textLength="30.500" lengthAdjust="spacingAndGlyphs">Levels</text>
<text x="243" y="277" class="dl" textLength="57.500" lengthAdjust="spacingAndGlyphs">Visualization</text>

<rect x="25.500" y="291.500" width="456" height="313" fill="#fff" stroke="#828790" stroke-width="1.100"/>
<rect x="27" y="337" width="453" height="19" fill="#e8e8e8"/>
<path stroke="#d0d0d0" fill="none" d="M252.500 293V317M479.500 293V317"/>
<path stroke="#c8c8c8" fill="none" d="M252.500 317V376.500M27 336.500H480M27 356.500H480M27 376.500H480"/>
<text x="33" y="309" class="dl" textLength="37" lengthAdjust="spacingAndGlyphs">Variable</text>
<text x="259" y="309" class="dl" textLength="26.500" lengthAdjust="spacingAndGlyphs">Value</text>
<text x="48" y="331" class="dl" textLength="51" lengthAdjust="spacingAndGlyphs">ADXPeriod</text>
<text x="47.500" y="351" class="dl" textLength="40" lengthAdjust="spacingAndGlyphs">ref_level</text>
<text x="47" y="371" class="dl" textLength="52" lengthAdjust="spacingAndGlyphs">trend_level</text>
<text x="256" y="331" class="dl">5</text>
<text x="256" y="351" class="dl">20</text>
<text x="256" y="371" class="dl">30</text>
<g fill="#a8cdf0" stroke="#5a90c8">
<path d="M28.500 319.500H40L43.500 323V335H28.500z"/>
<path d="M28.500 339.500H40L43.500 343V355H28.500z"/>
<path d="M28.500 359.500H40L43.500 363V375H28.500z"/>
</g>
<text x="30" y="331" font-size="7" font-weight="bold" fill="#1a3050" textLength="11" lengthAdjust="spacingAndGlyphs">123</text>
<text x="30" y="351" font-size="7" font-weight="bold" fill="#1a3050" textLength="11" lengthAdjust="spacingAndGlyphs">123</text>
<text x="30" y="371" font-size="7" font-weight="bold" fill="#1a3050" textLength="11" lengthAdjust="spacingAndGlyphs">123</text>

<g fill="#e1e1e1" stroke="#adadad">
<rect x="490.500" y="549.500" width="102" height="20"/>
<rect x="490.500" y="582.500" width="102" height="20"/>
<rect x="447.500" y="620.500" width="72" height="20"/>
<rect x="528.500" y="620.500" width="72" height="20"/>
</g>
<rect x="367" y="621" width="71" height="20" fill="#e1e1e1" stroke="#0078d7" stroke-width="2"/>
<text x="529" y="563" class="dl" textLength="23" lengthAdjust="spacingAndGlyphs">Load</text>
<text x="529" y="596.500" class="dl" textLength="24.500" lengthAdjust="spacingAndGlyphs">Save</text>
<text x="394" y="635" class="dl" textLength="16" lengthAdjust="spacingAndGlyphs">OK</text>
<text x="466.500" y="635" class="dl" textLength="33" lengthAdjust="spacingAndGlyphs">Cancel</text>
<text x="550" y="635" class="dl" textLength="27" lengthAdjust="spacingAndGlyphs">Reset</text>
<path fill="#b8b8b8" d="M605 640h2v2h-2zM602 643h2v2h-2zM605 643h2v2h-2zM599 646h2v2h-2zM602 646h2v2h-2zM605 646h2v2h-2z"/>
</svg>
</body></html>
